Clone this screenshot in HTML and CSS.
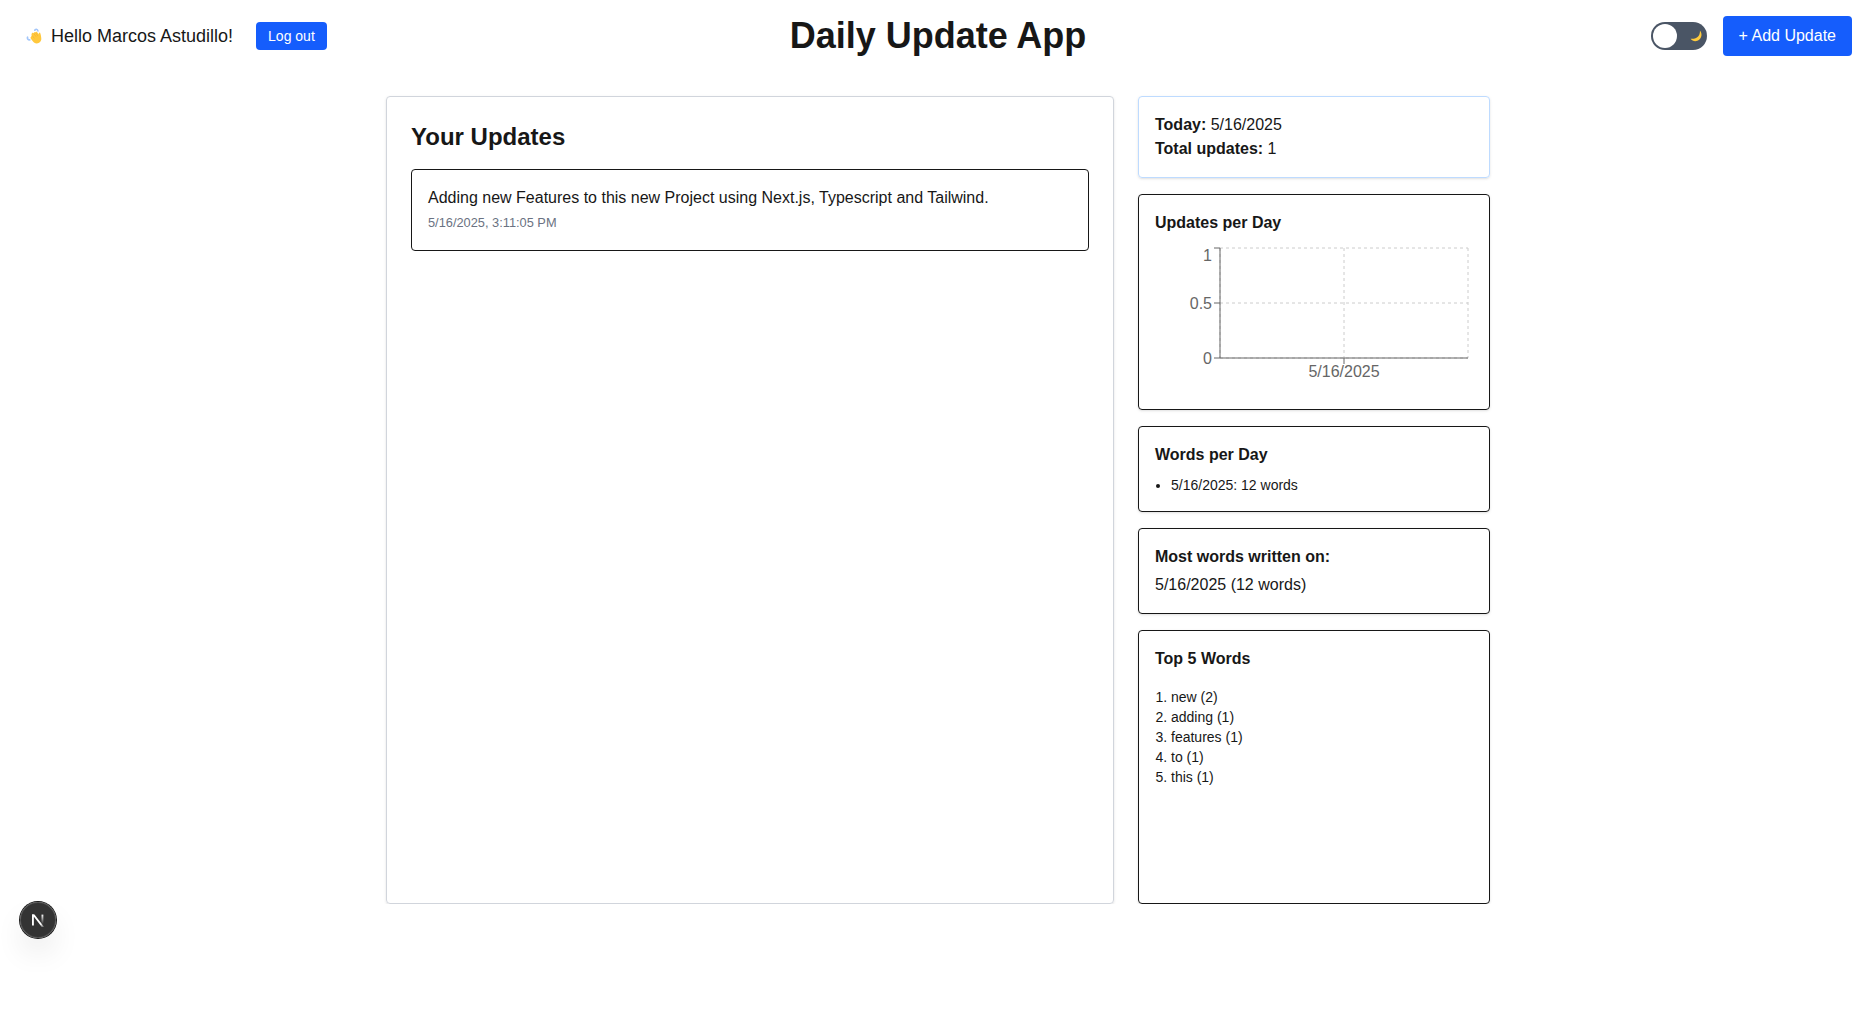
FILE: index.html
```html
<!DOCTYPE html>
<html lang="en">
<head>
<meta charset="utf-8">
<title>Daily Update App</title>
<link rel="stylesheet" href="styles.css">
</head>
<body>
<div class="app">
  <header class="header">
    <div class="header-side">
      <p class="greeting">
        <svg class="wave" viewBox="0 0 22 22" aria-hidden="true">
          <path d="M10.800 5.200c.4-1.300 2.700-1.400 3.100.6M3.600 12.200c-.6 1.200.2 2.700 2.100 2.700" fill="none" stroke="#a3c6fa" stroke-width="1.700" stroke-linecap="round"/>
          <path d="M7.800 8.400c.5-.8 1.300-.6 1.900 0-.2-1 1-1.500 1.700-.8 0-.9 1.200-1.200 1.800-.4l1.500 2.300c-.1-1.100.3-2.100 1.300-2 .8 1.800 1.200 4 1.300 6.200.1 2.500-1.900 4.600-4.400 4.700-1.900.1-3.200-1-4.300-2.400l-1.900-2.600c-.6-.8.100-1.500.8-1.300-.8-.8-.3-1.700.5-1.700-.6-.7-.7-1.400-.2-2z" fill="#ffc83d"/>
          <path d="M9.700 8.400l2.500 3.400M11.500 7.700l2.300 3.200M8 10.400l2.400 3" stroke="#f0a92c" stroke-width=".5"/>
        </svg>
        <span>Hello Marcos Astudillo!</span>
      </p>
      <button class="button button-small">Log out</button>
    </div>
    <h1 class="title">Daily Update App</h1>
    <div class="header-side header-actions">
      <button class="toggle" aria-label="Toggle dark mode">
        <span class="toggle-knob"></span>
        <svg class="moon" viewBox="0 0 12 12" aria-hidden="true"><path d="M9.900.6c2.300 2.600 2.100 6.700-.5 9C6.600 12 2.500 11.600.6 8.700c3.100.4 5.700-.3 7.500-2.300C9.500 4.800 10.100 2.800 9.900.6z" fill="#ffcb3d"/></svg>
      </button>
      <button class="button">+ Add Update</button>
    </div>
  </header>
  <main class="board">
    <section class="card updates">
      <h2 class="updates-title">Your Updates</h2>
      <article class="update">
        <p>Adding new Features to this new Project using Next.js, Typescript and Tailwind.</p>
        <small class="date">5/16/2025, 3:11:05 PM</small>
      </article>
    </section>
    <aside class="stats">
      <section class="card stat summary">
        <p><strong>Today:</strong> 5/16/2025</p>
        <p><strong>Total updates:</strong> 1</p>
      </section>
      <section class="card stat">
        <h3 class="stat-title gap-medium">Updates per Day</h3>
        <svg class="chart" width="318" height="150" viewBox="0 0 318 150">
          <g class="chart-grid">
            <path d="M65 5H313M65 60H313M65 115H313"/>
            <path d="M65 5V115M189 5V115M313 5V115"/>
          </g>
          <path class="chart-axis" d="M65 115H313M189 121V115M65 5V115M59 115H65M59 60H65M59 5H65"/>
          <g class="chart-label">
            <text x="57" y="120.700" text-anchor="end">0</text>
            <text x="57" y="65.700" text-anchor="end">0.5</text>
            <text x="57" y="17.700" text-anchor="end">1</text>
            <text x="189" y="134.300" text-anchor="middle">5/16/2025</text>
          </g>
        </svg>
      </section>
      <section class="card stat">
        <h3 class="stat-title gap-medium">Words per Day</h3>
        <ul class="list bullets"><li>5/16/2025: 12 words</li></ul>
      </section>
      <section class="card stat">
        <h3 class="stat-title gap-small">Most words written on:</h3>
        <p>5/16/2025 (12 words)</p>
      </section>
      <section class="card stat top-words">
        <h3 class="stat-title gap-large">Top 5 Words</h3>
        <ol class="list numbers">
          <li>new (2)</li>
          <li>adding (1)</li>
          <li>features (1)</li>
          <li>to (1)</li>
          <li>this (1)</li>
        </ol>
      </section>
    </aside>
  </main>
</div>
<div class="dev-badge">
  <svg width="40" height="40" viewBox="0 0 40 40" fill="none" aria-hidden="true">
    <defs>
      <linearGradient id="diagonal" gradientUnits="userSpaceOnUse" x1="9.956" y1="11.123" x2="15.478" y2="17.967"><stop stop-color="#fff"/><stop offset=".604" stop-color="#fff" stop-opacity="0"/></linearGradient>
      <linearGradient id="stem" gradientUnits="userSpaceOnUse" x1="11.822" y1="1.400" x2="11.792" y2="11"><stop stop-color="#fff"/><stop offset="1" stop-color="#fff" stop-opacity="0"/></linearGradient>
      <clipPath id="mark"><path d="M1.400 1.300H14V14H1.400z"/></clipPath>
    </defs>
    <g transform="translate(12.600 13)" stroke-width="1.860" clip-path="url(#mark)">
      <path d="M13.300 15.200L2.340 1V12.600" stroke="url(#diagonal)"/>
      <path d="M11.825 1.500V13.100" stroke="url(#stem)"/>
    </g>
  </svg>
</div>
</body>
</html>
```
FILE: styles.css
```css
* { box-sizing: border-box; margin: 0; padding: 0; }

html { overflow: hidden; }

body {
  background: #fff;
  color: #171717;
  font: 16px/24px "Liberation Sans", Arial, sans-serif;
}

.app { width: 1876px; }

.header {
  display: grid;
  grid-template-columns: 1fr auto 1fr;
  align-items: center;
  height: 72px;
  padding: 0 24px;
}

.header-side { display: flex; align-items: center; gap: 23px; }
.header-actions { justify-content: flex-end; gap: 16px; }

.greeting { display: flex; align-items: center; font-size: 18px; line-height: 28px; }
.wave { width: 22px; height: 22px; margin-right: 5px; }

.title { font-size: 36px; line-height: 40px; font-weight: 700; }

.button {
  height: 40px;
  padding: 0 16px;
  border: 0;
  border-radius: 4px;
  background: #155dfc;
  color: #fff;
  font: inherit;
}
.button-small { height: 28px; padding: 0 12px; font-size: 14px; }

.toggle {
  display: flex;
  align-items: center;
  justify-content: space-between;
  width: 56px;
  height: 28px;
  padding: 0 5px 0 2px;
  border: 0;
  border-radius: 14px;
  background: #4a5565;
}
.toggle-knob { width: 24px; height: 24px; border-radius: 50%; background: #fff; }
.moon { width: 12px; height: 12px; }

.board {
  display: grid;
  grid-template-columns: 728px 352px;
  gap: 24px;
  width: 1104px;
  height: 808px;
  margin: 24px auto 0;
}

.card {
  border: 1px solid #171717;
  border-radius: 4px;
  box-shadow: 0 1px 3px rgba(0, 0, 0, .1), 0 1px 2px -1px rgba(0, 0, 0, .1);
}

.updates { padding: 24px; border-color: #d1d5dc; }
.updates-title { margin-bottom: 16px; font-size: 24px; line-height: 32px; }
.update { padding: 16px; border: 1px solid #171717; border-radius: 4px; }
.date { display: block; height: 24px; color: #6a7282; font-size: 12.8px; line-height: 26px; }

.stats { display: flex; flex-direction: column; gap: 16px; }
.stat { padding: 16px; }
.summary { border-color: #bedbff; }
.stat-title { font-size: 16px; line-height: 24px; }
.gap-small { margin-bottom: 4px; }
.gap-medium { margin-bottom: 8px; }
.gap-large { margin-bottom: 16px; }

.chart { display: block; }
.chart-grid { fill: none; stroke: #ccc; stroke-dasharray: 3 3; }
.chart-axis { fill: none; stroke: #666; }
.chart-label { fill: #666; font-size: 16px; }

.list { padding-left: 16px; font-size: 14px; line-height: 20px; }
.bullets { list-style: disc; }
.numbers { list-style: decimal; }
.top-words { flex: 1; }

.dev-badge {
  position: fixed;
  top: 902px;
  left: 20px;
  display: grid;
  place-content: center;
  width: 36px;
  height: 36px;
  border-radius: 50%;
  background: rgba(0, 0, 0, .8);
  box-shadow: 0 0 0 1px #171717, inset 0 0 0 1px rgba(255, 255, 255, .14), 0 16px 32px -8px rgba(0, 0, 0, .24);
}
```
